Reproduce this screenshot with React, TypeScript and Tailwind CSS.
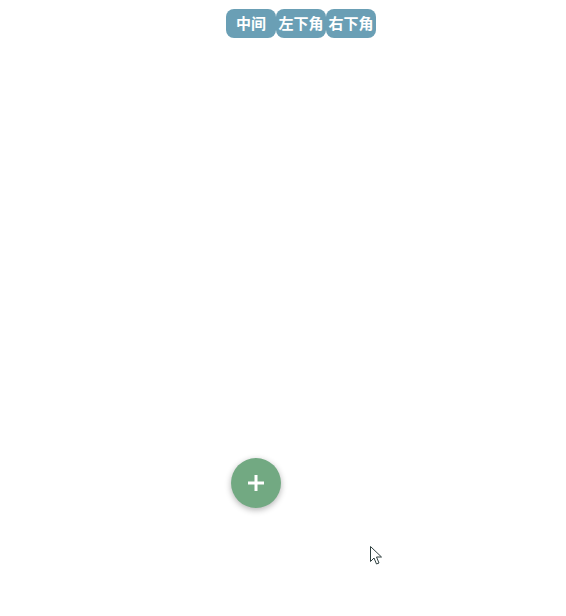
export default function App() {
  const labels = ['中间', '左下角', '右下角'];
  return (
    <div className="relative h-[616px] w-[566px] bg-white" style={{ fontFamily: '"Noto Sans CJK SC", sans-serif' }}>
      <div className="flex pl-[226px] pt-[9px]">
        {labels.map((l) => (
          <button
            key={l}
            className="flex h-[29px] w-[50px] items-center justify-center whitespace-nowrap rounded-lg bg-[#6a9fb5] pb-[3px] text-[15px] font-bold leading-none text-white"
          >
            {l}
          </button>
        ))}
      </div>
      <div className="flex pl-[231px] pt-[420px]">
        <button className="flex h-[50px] w-[50px] items-center justify-center rounded-full bg-[#72a982] shadow-[0_2px_6px_rgba(0,0,0,0.3)]">
          <svg width="18" height="18" viewBox="0 0 18 18">
            <path d="M9 1v16M1 9h16" stroke="white" strokeWidth="3" />
          </svg>
        </button>
      </div>
      <svg className="absolute left-[370px] top-[546px]" width="13" height="20" viewBox="0 0 13 20">
        <path d="M0.5 0.5v15l3.5-3.5 2.5 6 2.5-1-2.5-6h5z" fill="white" stroke="#2f3f3f" strokeWidth="1" strokeLinejoin="round" />
      </svg>
    </div>
  );
}
